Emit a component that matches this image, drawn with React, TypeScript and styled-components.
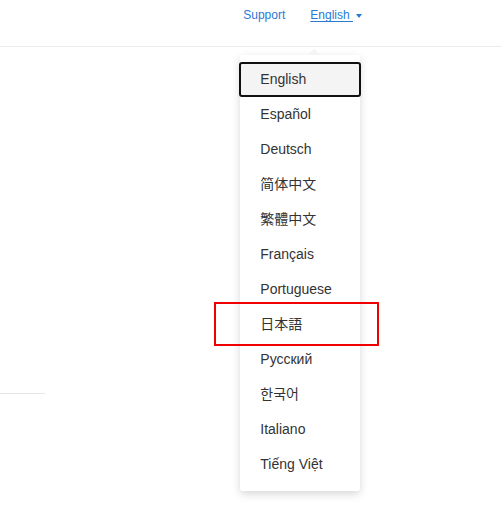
import React from "react";
import styled, { createGlobalStyle } from "styled-components";

const Global = createGlobalStyle`
  html, body { margin: 0; padding: 0; background: #fff; }
  body { font-family: "Liberation Sans", Arial, sans-serif; width: 501px; height: 520px; overflow: hidden; }
`;

const Page = styled.div`
  position: relative;
  width: 501px;
  height: 520px;
`;

const Header = styled.header`
  height: 46px;
  border-bottom: 1px solid #ececec;
  display: flex;
  justify-content: flex-end;
  align-items: flex-start;
  padding-right: 139px;
  box-sizing: content-box;
`;

const Nav = styled.nav`
  display: flex;
  align-items: center;
  gap: 25px;
  margin-top: 8px;
  font-size: 12px;
  line-height: 15px;
`;

const NavLink = styled.a<{ $underline?: boolean }>`
  color: #2a7ad4;
  text-decoration: ${(p) => (p.$underline ? "underline" : "none")};
  text-underline-offset: 2px;
  cursor: pointer;
  white-space: pre;
`;

const LangWrap = styled.div`
  position: relative;
  display: flex;
  align-items: center;
  gap: 3px;
`;

const Caret = styled.span`
  width: 0;
  height: 0;
  border-left: 3.5px solid transparent;
  border-right: 3.5px solid transparent;
  border-top: 4px solid #2a7ad4;
  margin-top: 1px;
`;

const Menu = styled.ul`
  position: absolute;
  top: 47px;
  left: -70px;
  width: 120px;
  margin: 0;
  padding: 7px 0 9px;
  list-style: none;
  background: #fff;
  border-radius: 3px;
  box-shadow: 0 3px 8px rgba(0, 0, 0, 0.16);
  z-index: 10;

  &::before {
    content: "";
    position: absolute;
    top: -6px;
    left: 68px;
    width: 0;
    height: 0;
    border-left: 6px solid transparent;
    border-right: 6px solid transparent;
    border-bottom: 6px solid #f4f4f4;
  }
`;

const Item = styled.li<{ $active?: boolean }>`
  height: 35px;
  box-sizing: border-box;
  display: flex;
  align-items: center;
  padding-left: 19px;
  font-size: 14px;
  color: #333;
  font-family: "Liberation Sans", Arial, "Noto Sans CJK JP", sans-serif;
  border: 2px solid ${(p) => (p.$active ? "#111" : "transparent")};
  border-radius: 3px;
  background: ${(p) => (p.$active ? "#f4f4f4" : "transparent")};
  margin: 0 -1px;
`;

const Main = styled.main`
  padding-top: 346px;
`;

const Rule = styled.div`
  width: 45px;
  height: 1px;
  background: #e6e6e6;
`;

const Highlight = styled.div`
  position: absolute;
  left: 214px;
  top: 302px;
  width: 165px;
  height: 44px;
  box-sizing: border-box;
  border: 2px solid #f00000;
  pointer-events: none;
  z-index: 20;
`;

const languages = [
  "English",
  "Español",
  "Deutsch",
  "简体中文",
  "繁體中文",
  "Français",
  "Portuguese",
  "日本語",
  "Русский",
  "한국어",
  "Italiano",
  "Tiếng Việt",
];

export default function App() {
  return (
    <Page>
      <Global />
      <Header>
        <Nav>
          <NavLink>Support</NavLink>
          <LangWrap>
            <NavLink $underline>{"English "}</NavLink>
            <Caret />
            <Menu>
              {languages.map((l, i) => (
                <Item key={l} $active={i === 0}>
                  {l}
                </Item>
              ))}
            </Menu>
          </LangWrap>
        </Nav>
      </Header>
      <Main>
        <Rule />
      </Main>
      <Highlight />
    </Page>
  );
}
